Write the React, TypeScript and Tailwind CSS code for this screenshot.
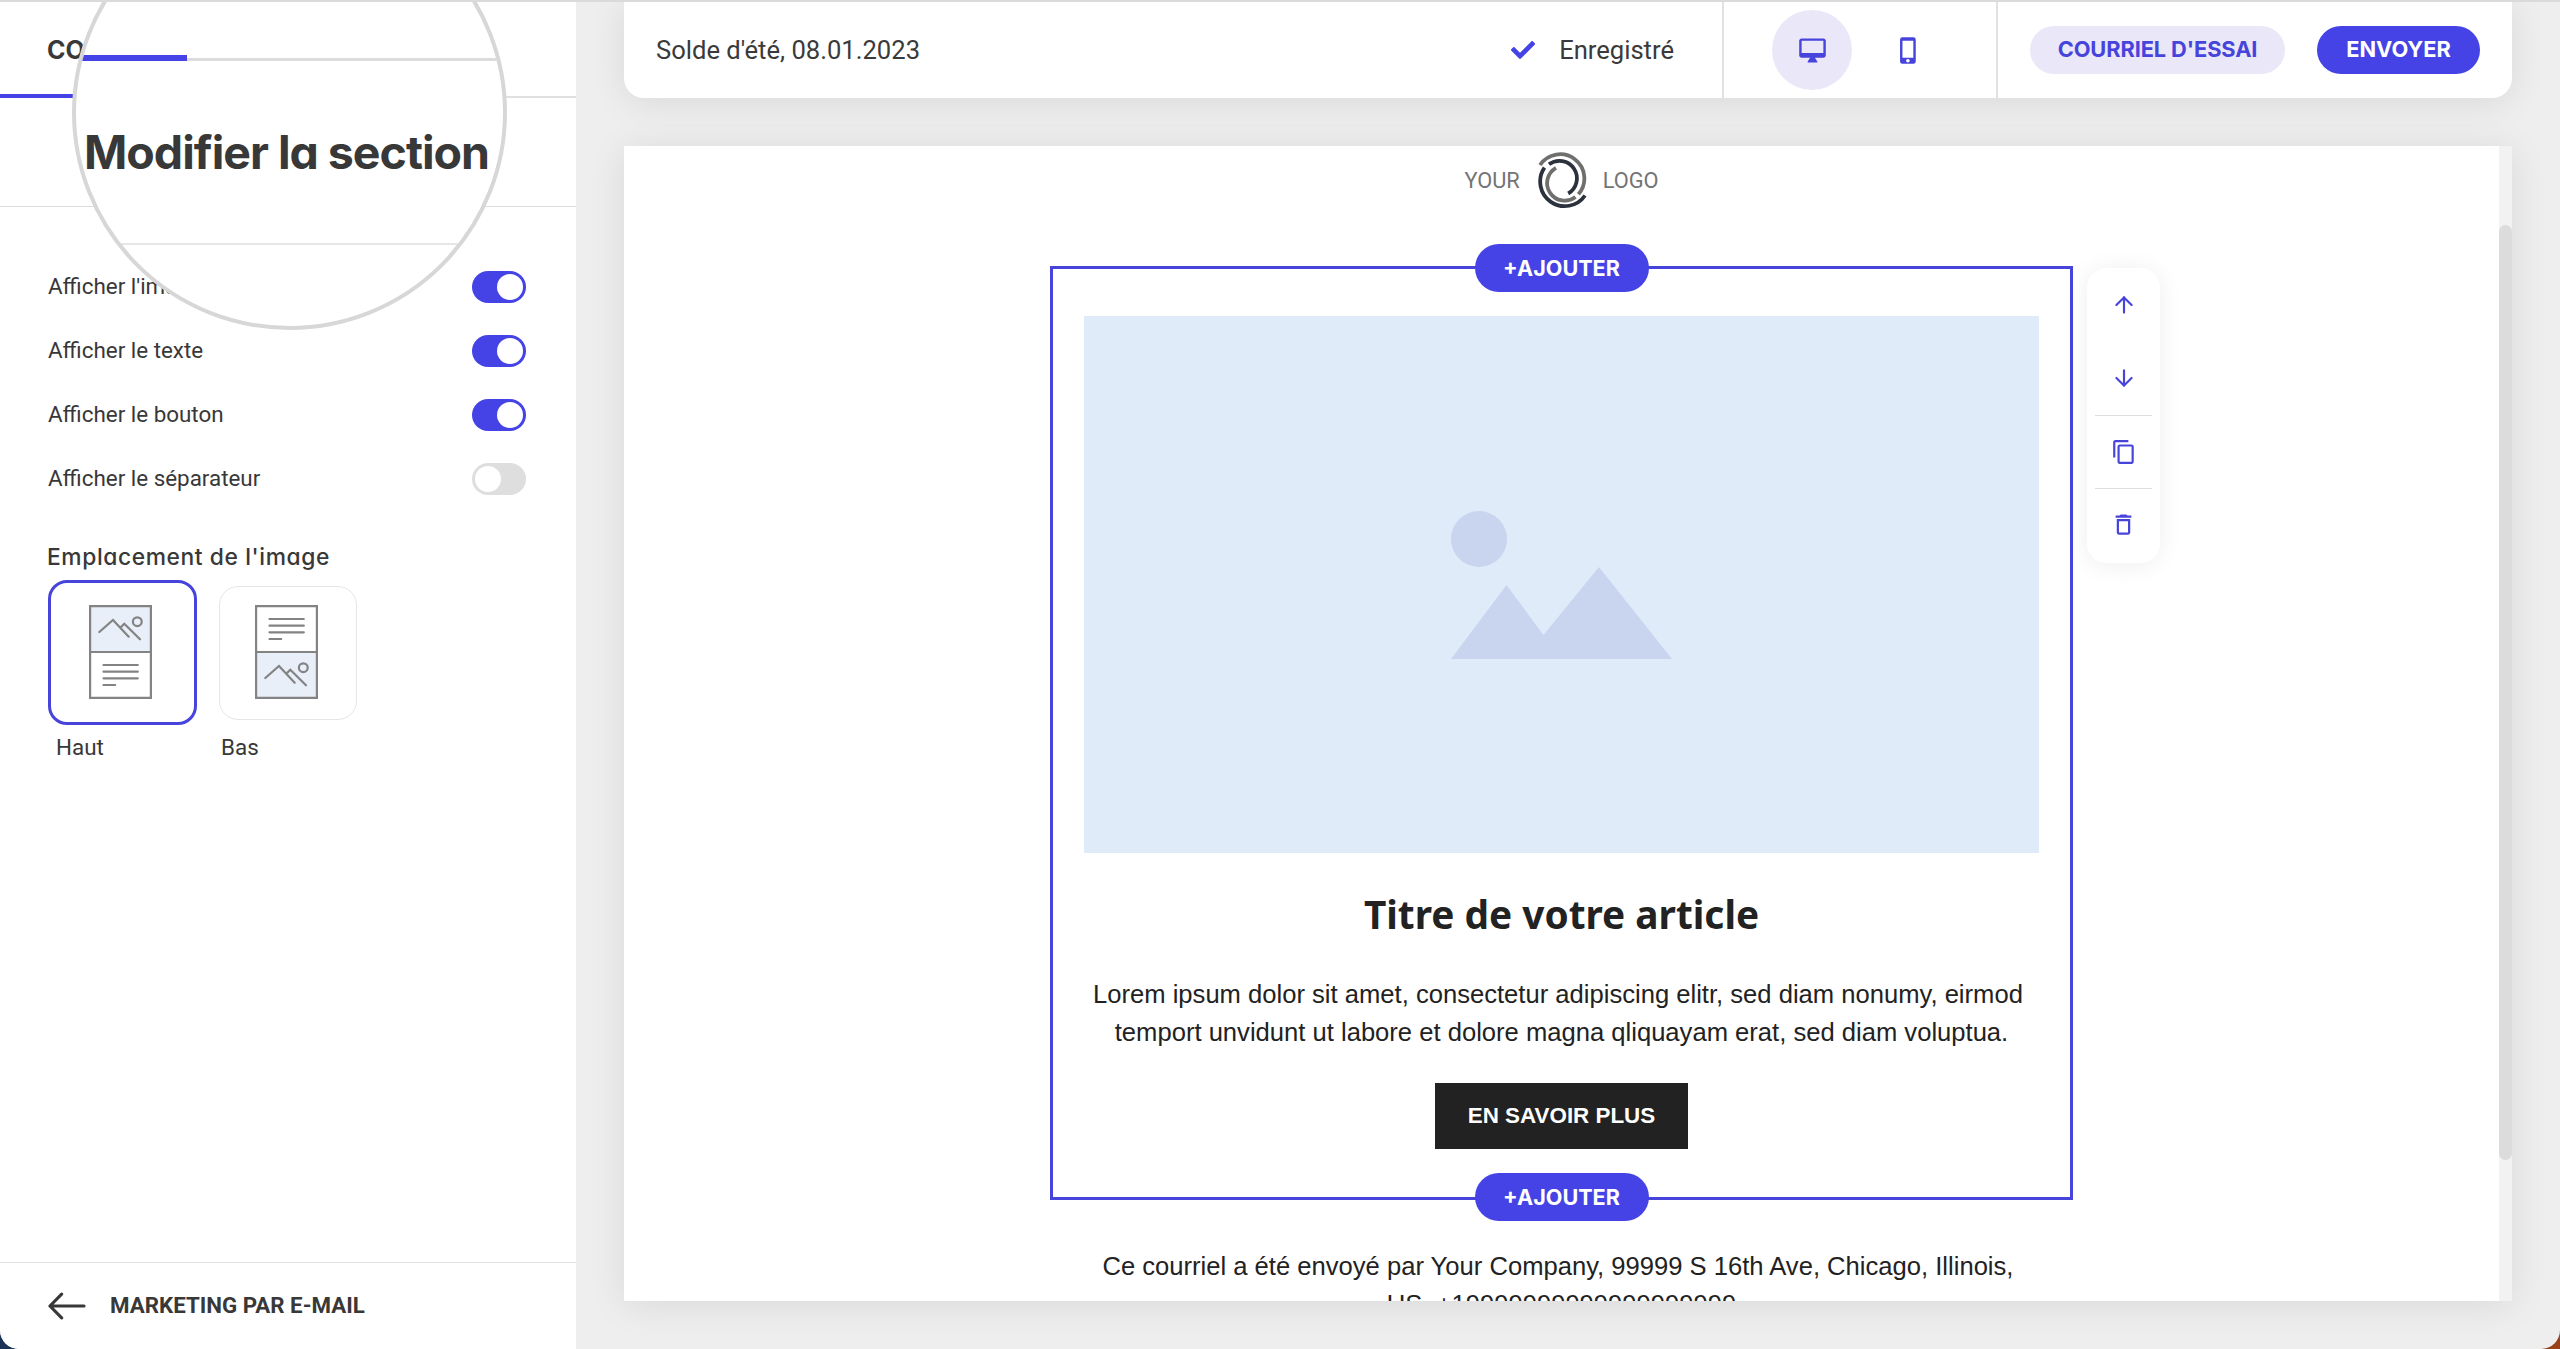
import { ArrowDown, ArrowUp } from "lucide-react";
import { FaCheck } from "react-icons/fa";
import { MdContentCopy, MdDeleteOutline } from "react-icons/md";

const toggles = [
  { id: 1, label: "Afficher l'image", on: true },
  { id: 2, label: "Afficher le texte", on: true },
  { id: 3, label: "Afficher le bouton", on: true },
  { id: 4, label: "Afficher le séparateur", on: false },
];

function Toggle({ on }: { on: boolean }) {
  return (
    <span
      className={`flex h-8 w-[54px] items-center rounded-full px-[3px] ${
        on ? "justify-end bg-[#4543e5]" : "justify-start bg-[#dedede]"
      }`}
    >
      <span className="h-[26px] w-[26px] rounded-full bg-white" />
    </span>
  );
}

function LayoutIcon({ imageFirst }: { imageFirst: boolean }) {
  const imageY = imageFirst ? 0 : 46;
  const textY = imageFirst ? 46 : 0;
  return (
    <svg
      className="h-[94px] w-[63px]"
      viewBox="0 0 63 94"
      fill="none"
      stroke="#838383"
      strokeWidth="2.2"
      strokeLinecap="round"
    >
      <rect x="1" y={imageY + 1} width="61" height="46" fill="#e8eff9" stroke="none" />
      <path d="M1.100 1.100h60.800v91.800H1.100zM1 47h61" strokeLinecap="butt" />
      <g transform={`translate(0 ${imageY})`}>
        <path d="M10.3 27 24 15l15.7 16.7M32 22l3.3-3.3L51 34.3" />
        <circle cx="48.3" cy="16.7" r="4.4" />
      </g>
      <path
        transform={`translate(0 ${textY})`}
        d="M14.5 14h34.300M14.500 20.700h34.300M14.500 27.300h34.300M14.500 34h11.700"
      />
    </svg>
  );
}

function DesktopIcon() {
  return (
    <svg className="h-[29px] w-[29px]" viewBox="0 0 24 24" fill="currentColor">
      <path d="M21 2H3c-1.1 0-2 .9-2 2v12c0 1.1.9 2 2 2h7l-2 3v1h8v-1l-2-3h7c1.1 0 2-.9 2-2V4c0-1.1-.9-2-2-2zm0 12H3V4h18v10z" />
    </svg>
  );
}

function PhoneIcon() {
  return (
    <svg className="h-[29px] w-[29px]" viewBox="0 0 24 24" fill="currentColor">
      <path d="M16 1H7a2 2 0 0 0-2 2v18a2 2 0 0 0 2 2h9a2 2 0 0 0 2-2V3a2 2 0 0 0-2-2zm-4.500 21a1.500 1.500 0 1 1 0-3 1.500 1.500 0 0 1 0 3zm4.500-4H7V4h9v14z" />
    </svg>
  );
}

function Magnifier() {
  return (
    <div className="absolute -top-[107px] left-[72px] h-[435px] w-[435px] overflow-hidden rounded-full border-4 border-[#d7d7d7] bg-white">
      <div className="mt-[156px] flex items-end">
        <div className="h-1.5 w-[111px] bg-[#4543e5]" />
        <div className="h-[3px] flex-1 bg-[#dcdcdc]" />
      </div>
      <div className="flex h-[184px] items-center border-b-2 border-[#e6e6e6] pl-2">
        <h2 className="whitespace-nowrap text-[46.5px] leading-none font-bold tracking-[-1px] text-[#383838] [font-feature-settings:'cv11']">
          Modifier la section
        </h2>
      </div>
    </div>
  );
}

function Sidebar() {
  return (
    <aside className="relative flex w-[576px] flex-col bg-white font-['Inter',sans-serif] text-[#383838]">
      <div className="flex h-24 items-center border-b-2 border-[#e0e0e0] pt-[3px] pl-[47px] text-[25px] font-bold">
        CO
      </div>
      <div className="-mt-1 h-1 w-48 bg-[#4543e5]" />
      <div className="h-[109px] border-b border-[#dedede]" />
      <div className="px-12 pt-12 font-['Roboto',sans-serif] text-[22.4px]">
        {toggles.map((toggle) => (
          <div key={toggle.id} className="flex h-16 items-center justify-between pr-0.5">
            <span>{toggle.label}</span>
            <Toggle on={toggle.on} />
          </div>
        ))}
      </div>
      <h3 className="mt-[30px] pl-[47px] text-[22.8px] leading-8 font-medium tracking-[0.6px] [font-feature-settings:'cv11']">
        Emplacement de l'image
      </h3>
      <div className="mt-[7px] flex items-center gap-[22px] pl-12">
        <div className="flex h-[145px] w-[149px] items-center justify-center rounded-[19px] border-[3px] border-[#4744dc] pr-1 pb-0.5">
          <LayoutIcon imageFirst />
        </div>
        <div className="flex h-[134px] w-[138px] items-center justify-center rounded-[19px] border-[1.5px] border-[#e6e6e6] pr-1 pb-0.5">
          <LayoutIcon imageFirst={false} />
        </div>
      </div>
      <div className="mt-2 flex pl-14 font-['Roboto',sans-serif] text-[22.4px] leading-7">
        <span className="w-[165px]">Haut</span>
        <span>Bas</span>
      </div>
      <div className="mt-auto flex h-[87px] items-center gap-6 border-t border-[#e2e2e2] pl-12">
        <svg
          className="h-7 w-[38px]"
          viewBox="0 0 39 28"
          fill="none"
          stroke="#383838"
          strokeWidth="3.2"
          strokeLinecap="round"
          strokeLinejoin="round"
        >
          <path d="M37 14H2M14 1.800 2 14l12 12.200" />
        </svg>
        <span className="font-['Roboto',sans-serif] text-[22.3px] font-bold">
          MARKETING PAR E-MAIL
        </span>
      </div>
      <Magnifier />
    </aside>
  );
}

function Header() {
  return (
    <header className="flex h-24 shrink-0 rounded-b-[20px] bg-white shadow-[0_4px_36px_rgba(0,0,0,0.09)]">
      <div className="flex flex-1 items-center border-r-2 border-[#e2e2e2] pr-12 pl-8 font-['Roboto',sans-serif] text-[25.6px] text-[#3a3a3a]">
        <span className="mr-auto">Solde d'été, 08.01.2023</span>
        <FaCheck className="mr-6 h-6 w-6 text-[#4543e5]" />
        <span>Enregistré</span>
      </div>
      <div className="flex w-[274px] items-center gap-4 border-r-2 border-[#e2e2e2] pl-12 text-[#4744dc]">
        <div className="flex h-20 w-20 items-center justify-center rounded-full bg-[#eae7f8]">
          <DesktopIcon />
        </div>
        <div className="flex h-20 w-20 items-center justify-center">
          <PhoneIcon />
        </div>
      </div>
      <div className="flex items-center gap-8 pr-8 pb-px pl-8 text-[21.8px] font-bold">
        <button className="h-12 w-[255px] rounded-full bg-[#eae7f8] tracking-[-0.1px] text-[#4744dc]">
          COURRIEL D'ESSAI
        </button>
        <button className="h-12 w-[163px] rounded-full bg-[#4543e5] text-white">
          ENVOYER
        </button>
      </div>
    </header>
  );
}

function Logo() {
  return (
    <div className="flex h-[120px] items-start justify-center pt-1.5 font-['Roboto',sans-serif] text-[21.8px] leading-[58px] text-[#747474]">
      <span>YOUR</span>
      <svg
        className="mr-4 ml-[17px] h-[58px] w-[50px]"
        viewBox="0 0 50 58"
        fill="none"
        strokeWidth="3.8"
      >
        <path stroke="#6f6f6e" d="M3 13A24.200 24.200 0 1 1 41.400 42.300" />
        <path stroke="#2b323d" d="M12 12.300A17.500 17.500 0 1 1 31.200 41.500" />
        <path stroke="#2b323d" d="M7.500 15.700A24.400 24.400 0 1 0 48 43.500" />
        <path stroke="#6f6f6e" d="M19 15.800A17.600 17.600 0 1 0 38.500 45" />
      </svg>
      <span>LOGO</span>
    </div>
  );
}

function AddButton({ className }: { className: string }) {
  return (
    <button
      className={`absolute left-1/2 h-12 w-[174px] -translate-x-1/2 rounded-full bg-[#4543e5] text-[21.6px] font-bold text-white ${className}`}
    >
      +AJOUTER
    </button>
  );
}

function SectionTools() {
  return (
    <div className="absolute -top-px left-[1034px] flex h-[295px] w-[73px] flex-col rounded-[19px] bg-white px-2 text-[#4744dc] shadow-[0_2px_24px_rgba(0,0,0,0.07)]">
      <div className="flex flex-1 items-center justify-center pt-px">
        <ArrowUp className="h-[26px] w-[26px]" />
      </div>
      <div className="flex flex-1 items-center justify-center pt-px">
        <ArrowDown className="h-[26px] w-[26px]" />
      </div>
      <div className="flex flex-1 items-center justify-center border-y border-[#dddddd]">
        <MdContentCopy className="h-[26px] w-[26px]" />
      </div>
      <div className="flex flex-1 items-center justify-center pb-0.5">
        <MdDeleteOutline className="h-[27px] w-[27px]" />
      </div>
    </div>
  );
}

function Article() {
  return (
    <section className="relative flex h-[934px] flex-col items-center border-[3px] border-[#4744dc] px-[31px] pt-[47px] text-[#222222]">
      <div className="flex h-[537px] w-full shrink-0 justify-center bg-[#dfebf9] pt-[195px]">
        <svg className="h-[148px] w-[221px]" viewBox="0 0 221 148" fill="#c9d4ef">
          <circle cx="28" cy="28" r="28" />
          <path d="M0 148 55.500 74 92.500 124 148 56l73 92z" />
        </svg>
      </div>
      <h1 className="mt-[37px] font-['Noto_Sans',sans-serif] text-[38.8px] leading-[48px] font-bold">
        Titre de votre article
      </h1>
      <p className="mt-[37px] text-center font-['Liberation_Sans',sans-serif] text-[25.6px] leading-[38.4px] whitespace-nowrap">
        Lorem ipsum dolor sit amet, consectetur adipiscing elitr, sed diam nonumy, eirmod&nbsp;
        <br />
        temport unvidunt ut labore et dolore magna qliquayam erat, sed diam voluptua.
      </p>
      <button className="mt-[31px] h-[66px] w-[253px] shrink-0 bg-[#222222] font-['Liberation_Sans',sans-serif] text-[22.4px] font-bold text-white">
        EN SAVOIR PLUS
      </button>
      <AddButton className="-top-[25px]" />
      <AddButton className="-bottom-6" />
      <SectionTools />
    </section>
  );
}

function Preview() {
  return (
    <div className="mt-12 flex h-[1155px] bg-white shadow-[0_4px_36px_rgba(0,0,0,0.09)]">
      <div className="flex-1 overflow-hidden">
        <div className="mx-auto w-[1023px]">
          <Logo />
          <Article />
          <p className="mt-[47px] text-center font-['Liberation_Sans',sans-serif] text-[25.6px] leading-[38.4px] whitespace-nowrap text-[#222222]">
            Ce courriel a été envoyé par Your Company, 99999 S 16th Ave, Chicago, Illinois,&nbsp;
            <br />
            US, +19999999999999999999
          </p>
        </div>
      </div>
      <div className="w-[13px] bg-[#f2f2f2] pt-[79px]">
        <div className="h-[935px] rounded-full bg-[#dcdcdc]" />
      </div>
    </div>
  );
}

export default function App() {
  return (
    <div className="h-[1349px] w-[2560px] overflow-hidden bg-linear-to-r from-[#1b3357] to-[#9a4019]">
      <div className="flex h-full overflow-hidden rounded-b-[19px] border-t-2 border-[#dadadc] bg-[#eeeeee] font-['Inter',sans-serif]">
        <Sidebar />
        <main className="w-[1936px] pl-12">
          <Header />
          <Preview />
        </main>
      </div>
    </div>
  );
}
